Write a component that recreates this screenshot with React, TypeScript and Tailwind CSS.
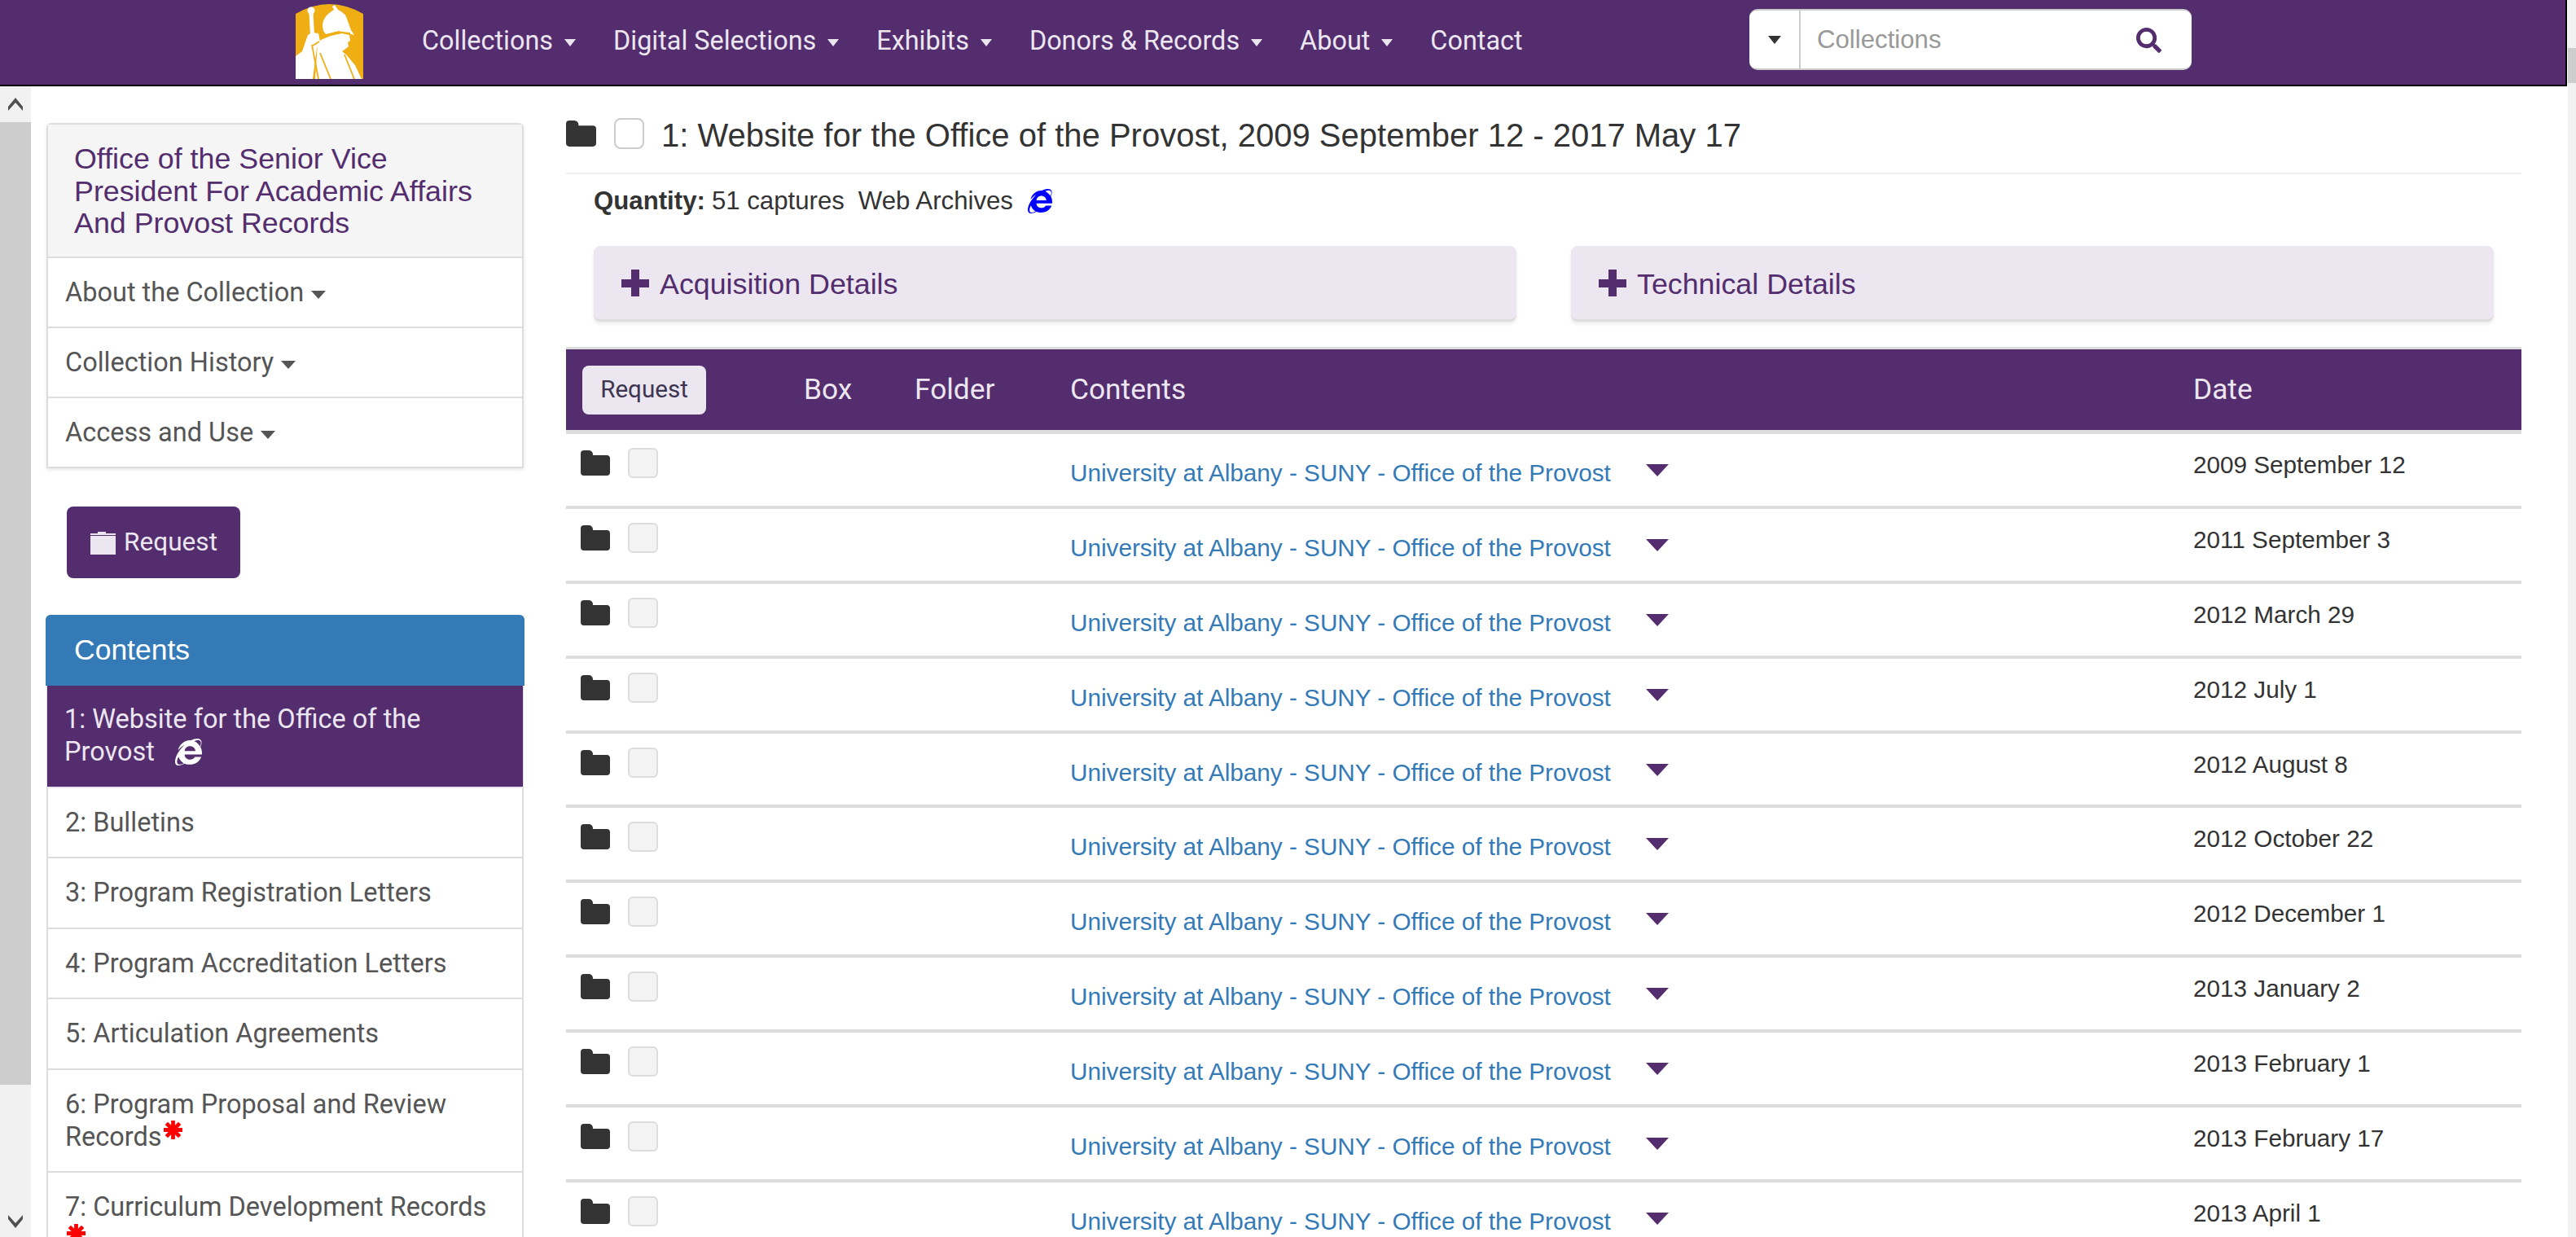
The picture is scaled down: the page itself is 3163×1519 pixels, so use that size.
import React from 'react';
import { FaInternetExplorer, FaSearch } from 'react-icons/fa';

const navItems = [
  { label: 'Collections', caret: true },
  { label: 'Digital Selections', caret: true },
  { label: 'Exhibits', caret: true },
  { label: 'Donors & Records', caret: true },
  { label: 'About', caret: true },
  { label: 'Contact', caret: false },
];

const dates = [
  '2009 September 12',
  '2011 September 3',
  '2012 March 29',
  '2012 July 1',
  '2012 August 8',
  '2012 October 22',
  '2012 December 1',
  '2013 January 2',
  '2013 February 1',
  '2013 February 17',
  '2013 April 1',
];

const series = [
  { label: '2: Bulletins' },
  { label: '3: Program Registration Letters' },
  { label: '4: Program Accreditation Letters' },
  { label: '5: Articulation Agreements' },
  { label: '6: Program Proposal and Review Records', star: true },
  { label: '7: Curriculum Development Records', star: true },
];

const FolderIcon = ({ className }: { className?: string }) => (
  <svg viewBox="0 0 36 31" className={className} fill="currentColor">
    <path d="M0 4a4 4 0 0 1 4-4h6a5 5 0 0 1 5 5v1h17a4 4 0 0 1 4 4v17a4 4 0 0 1-4 4H4a4 4 0 0 1-4-4z" />
  </svg>
);

const PlusIcon = () => (
  <svg viewBox="0 0 34 33" className="w-[34px] h-[33px]" fill="#532d6d">
    <path d="M12 0h10v12h12v10H22v11H12V22H0V12h12z" />
  </svg>
);

const Asterisk = () => (
  <svg viewBox="0 0 24 24" className="inline-block ml-[2px] w-[23px] h-[23px] align-[8px]" stroke="#ff0000" strokeWidth="5">
    <path d="M12 0v24M0 12h24M3.5 3.5l17 17M20.5 3.5l-17 17" />
  </svg>
);

const Logo = () => (
  <svg viewBox="0 0 83 92" className="w-[83px] h-[92px] shrink-0">
    <path d="M0 12Q41.5-12 83 12V92H0z" fill="#efae13" />
    {/* mace */}
    <circle cx="19" cy="8" r="4.5" fill="#fff" />
    <path d="M16.5 11h5L23 38h-5z" fill="#fff" />
    {/* arm and body */}
    <path d="M15 38l5-3 8 1 2 10-4 8-5 38H0V64l8-6z" fill="#fff" />
    {/* cloak and face */}
    <path d="M27 47l6-4 10-4 14-3 9 2 1 7-3 2 1 5-5 4-3 2 5 4 11 13 8 17H24z" fill="#fff" />
    {/* helmet */}
    <path d="M33 27q0-12 14-20l-2-4 3-2 4 6q10 4 12 14l4 11 4 6-19-5-16 4-3-4z" fill="#fff" />
    {/* brim shadow and robe folds */}
    <path d="M33 42q12-8 24-7l10 1" fill="none" stroke="#efae13" strokeWidth="2" />
    <path d="M20 50l8 42M30 60l13 32M60 62l12 30" fill="none" stroke="#efae13" strokeWidth="1.8" />
    <path d="M29 46l-8 5" fill="none" stroke="#efae13" strokeWidth="2" />
  </svg>
);

const SideRow = ({ label }: { label: string }) => (
  <div className="h-[86px] border-b-2 border-[#ddd] px-[21px] pt-[1px] flex items-center text-[#555]">
    {label}
    <span className="ml-[9px] mt-[5px] border-x-[9px] border-x-transparent border-t-[10px] border-t-[#555]" />
  </div>
);

export default function App() {
  return (
    <div className="w-[3163px] h-[1519px] overflow-hidden bg-white relative font-['Roboto',sans-serif]">
      {/* top nav */}
      <div className="h-[106px] w-[3152px] bg-[#532d6d] border-b-2 border-r-2 border-black flex items-center pl-[363px] relative z-10">
        <div className="pb-[2px]">
          <Logo />
        </div>
        <ul className="flex items-center gap-[46px] ml-[72px] text-[32.4px] text-[#ebe6f0] pb-[4px]">
          {navItems.map((item) => (
            <li key={item.label} className="flex items-center">
              {item.label}
              {item.caret && <span className="ml-[14px] mt-[5px] border-x-[7px] border-x-transparent border-t-[9px] border-t-[#ebe6f0]" />}
            </li>
          ))}
        </ul>
        <div className="absolute left-[2148px] top-[11px] w-[543px] h-[75px] bg-white rounded-[10px] border-y-2 border-[#ccc] flex items-center">
          <div className="w-[63px] h-full border-r-2 border-[#ccc] flex items-center justify-center">
            <span className="border-x-[8px] border-x-transparent border-t-[10px] border-t-[#333]" />
          </div>
          <span className="ml-[20px] mt-[2px] text-[31.2px] text-[#999] font-['Liberation_Sans',sans-serif]">Collections</span>
          <FaSearch className="absolute right-[37px] top-[21px] w-[31px] h-[31px] text-[#532d6d]" />
        </div>
      </div>

      <div className="flex h-[1413px]">
        {/* sidebar scrollbar */}
        <div className="w-[38px] shrink-0 bg-[#f1f1f1] flex flex-col">
          <div className="h-[44px] flex items-center justify-center shrink-0">
            <svg viewBox="0 0 18 16" className="w-[18px] h-[16px]" fill="#505050"><path d="M9 0l9 11v5L9 6 0 16v-5z" /></svg>
          </div>
          <div className="h-[1182px] bg-[#cdcdcd] shrink-0" />
          <div className="mt-auto h-[27px] flex items-start justify-center">
            <svg viewBox="0 0 18 16" className="w-[18px] h-[16px]" fill="#505050"><path d="M9 16L0 5V0l9 10 9-10v5z" /></svg>
          </div>
        </div>

        {/* sidebar */}
        <div className="w-[657px] shrink-0 pl-[19px] pr-[52px] pt-[45px] text-[32.5px] leading-[40.4px] overflow-hidden">
          <div className="border-x-2 border-t-2 border-[#ddd] rounded-t-[6px] shadow-[0_2px_4px_rgba(0,0,0,0.1)]">
            <div className="h-[164px] bg-[#f5f5f5] border-b-2 border-[#ddd] pl-[32px] pr-[33px] pt-[23px] text-[35.8px] leading-[39.6px] text-[#532d6d] font-['Liberation_Sans',sans-serif]">
              Office of the Senior Vice President For Academic Affairs And Provost Records
            </div>
            <SideRow label="About the Collection" />
            <SideRow label="Collection History" />
            <SideRow label="Access and Use" />
          </div>

          <button className="mt-[47px] ml-[25px] w-[213px] h-[88px] bg-[#532d6d] rounded-[8px] flex items-center pl-[29px] text-[31.6px] text-[#ebe6f0]">
            <svg viewBox="0 0 31 29" className="w-[31px] h-[29px] mr-[10px]" fill="#ebe6f0">
              <path d="M0 6h31v23H0zM0 3h9V1h10v2h12v2H0z" />
            </svg>
            Request
          </button>

          <div className="mt-[45px] h-[87px] bg-[#337ab7] rounded-t-[6px] pl-[35px] flex items-center text-white text-[35.5px] font-['Liberation_Sans',sans-serif] -mx-px">
            Contents
          </div>
          <div className="border-x-2 border-[#ddd]">
            <div className="bg-[#532d6d] text-[#ebe6f0] px-[21px] pt-[21px] h-[126px] border-b-2 border-[#ebe6f0] -mx-px">
              1: Website for the Office of the Provost
              <FaInternetExplorer className="inline-block ml-[25px] w-[33px] h-[33px] -mt-[4px] text-white" />
            </div>
            {series.map((item) => (
              <div key={item.label} className="px-[21px] py-[22px] border-b-2 border-[#ddd] text-[#555]">
                {item.label}
                {item.star && <Asterisk />}
              </div>
            ))}
          </div>
        </div>

        {/* main column */}
        <div className="flex-1 min-w-0 pr-[67px]">
          <div className="h-[108px] border-b-2 border-[#eee] flex items-start pt-[39px] text-[40px] leading-[42px] text-[#333] font-['Liberation_Sans',sans-serif]">
            <FolderIcon className="w-[37px] h-[32px] mt-[3px] text-[#333]" />
            <span className="ml-[22px] w-[37px] h-[38px] rounded-[8px] border-2 border-[#ccc] bg-white" />
            <span className="ml-[21px]">1: Website for the Office of the Provost, 2009 September 12 - 2017 May 17</span>
          </div>
          <div className="pl-[34px] pt-[13px] flex items-center text-[31.2px] leading-[40px] text-[#333] font-['Liberation_Sans',sans-serif]">
            <b>Quantity:</b>
            <span className="ml-[8px]">51 captures</span>
            <span className="ml-[17px]">Web Archives</span>
            <FaInternetExplorer className="ml-[18px] w-[30px] h-[30px] text-[#0000ff]" />
          </div>
          <div className="mt-[35px] mx-[34px] flex gap-[67px] text-[35.8px] text-[#532d6d] font-['Liberation_Sans',sans-serif]">
            {['Acquisition Details', 'Technical Details'].map((label) => (
              <div key={label} className="flex-1 h-[93px] bg-[#ebe6f0] rounded-[8px] border-b-[3px] border-[#ddd] shadow-[0_3px_4px_rgba(0,0,0,0.08)] flex items-center pl-[34px] gap-[13px]">
                <PlusIcon />
                <span className="mt-[5px]">{label}</span>
              </div>
            ))}
          </div>

          <div className="mt-[31px] border-t-[3px] border-[#ddd]">
            <div className="h-[104px] bg-[#532d6d] border-b-[5px] border-[#ddd] grid grid-cols-[272px_156px_191px_1379px_1fr] items-center text-[35.3px] text-[#ebe6f0]">
              <div className="pl-[20px]">
                <button className="w-[152px] h-[60px] bg-[#ebe6f0] rounded-[8px] text-[29.6px] text-[#3d3550]">Request</button>
              </div>
              <div className="pl-[20px]">Box</div>
              <div>Folder</div>
              <div>Contents</div>
              <div>Date</div>
            </div>
            {dates.map((date) => (
              <div key={date} className="h-[91.875px] border-b-4 border-[#ddd] grid grid-cols-[619px_1379px_1fr]">
                <div className="flex items-start pl-[18px] pt-[17px]">
                  <FolderIcon className="w-[36px] h-[31px] mt-[3px] text-[#333]" />
                  <span className="ml-[22px] w-[37px] h-[37px] rounded-[6px] border-2 border-[#ddd] bg-[#f3f3f3]" />
                </div>
                <div className="flex items-start pt-[28px] text-[29.7px] leading-[40px] text-[#337ab7] font-['Liberation_Sans',sans-serif]">
                  University at Albany - SUNY - Office of the Provost
                  <span className="ml-[43px] mt-[9px] border-x-[14px] border-x-transparent border-t-[15px] border-t-[#532d6d]" />
                </div>
                <div className="pt-[18px] text-[29.7px] leading-[40px] text-[#333] font-['Liberation_Sans',sans-serif]">{date}</div>
              </div>
            ))}
          </div>
        </div>
      </div>

      {/* page scrollbar */}
      <div className="absolute right-0 top-0 w-[10px] h-full bg-[#f1f1f1]">
        <div className="mt-[59px] h-[43px] bg-[#cdcdcd]" />
      </div>
    </div>
  );
}
